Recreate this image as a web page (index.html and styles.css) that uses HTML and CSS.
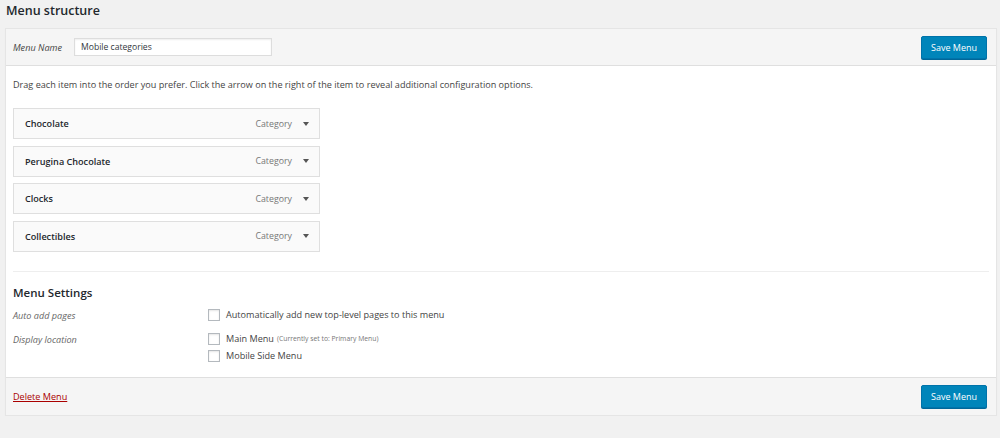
FILE: index.html
```html
<!DOCTYPE html>
<html lang="en">
<head>
    <meta charset="UTF-8">
    <title>Menus</title>
    <link rel="stylesheet" href="styles.css">
</head>
<body>
    <h2 class="page-title">Menu structure</h2>

    <div class="menu-edit">
        <!-- header with the menu name -->
        <div class="menu-header">
            <label class="name-field">
                <span class="name-label">Menu Name</span>
                <input type="text" class="name-input" value="Mobile categories">
            </label>
            <button class="save-btn">Save Menu</button>
        </div>

        <div class="menu-body">
            <p class="drag-help">Drag each item into the order you prefer. Click the arrow on the right of the item to reveal additional configuration options.</p>

            <ul class="menu-items">
                <li class="menu-item">
                    <span class="item-title">Chocolate</span>
                    <span class="item-type">Category</span>
                    <span class="item-arrow"></span>
                </li>
                <li class="menu-item">
                    <span class="item-title">Perugina Chocolate</span>
                    <span class="item-type">Category</span>
                    <span class="item-arrow"></span>
                </li>
                <li class="menu-item">
                    <span class="item-title">Clocks</span>
                    <span class="item-type">Category</span>
                    <span class="item-arrow"></span>
                </li>
                <li class="menu-item">
                    <span class="item-title">Collectibles</span>
                    <span class="item-type">Category</span>
                    <span class="item-arrow"></span>
                </li>
            </ul>

            <div class="menu-settings">
                <h3>Menu Settings</h3>
                <div class="setting-row">
                    <div class="setting-name">Auto add pages</div>
                    <div class="setting-input">
                        <label class="check"><span class="box"></span>Automatically add new top-level pages to this menu</label>
                    </div>
                </div>
                <div class="setting-row">
                    <div class="setting-name">Display location</div>
                    <div class="setting-input">
                        <label class="check"><span class="box"></span>Main Menu <span class="note">(Currently set to: Primary Menu)</span></label>
                        <label class="check"><span class="box"></span>Mobile Side Menu</label>
                    </div>
                </div>
            </div>
        </div>

        <div class="menu-footer">
            <a href="#" class="delete-link">Delete Menu</a>
            <button class="save-btn">Save Menu</button>
        </div>
    </div>
</body>
</html>
```

FILE: styles.css
```css
* {
    margin: 0;
    padding: 0;
    box-sizing: border-box;
}

body {
    font-family: "Open Sans", "Noto Sans", sans-serif;
    font-size: 9.1px;
    color: #23282d;
    background-color: #f1f1f1;
    padding: 0 3px 0 5px;
}

.page-title {
    font-size: 12.5px;
    font-weight: 600;
    color: #23282d;
    padding: 2px 0 0 1px;
    height: 28px;
}

.menu-edit {
    border: 1px solid #e5e5e5;
    box-shadow: 0 1px 1px rgba(0, 0, 0, 0.04);
    background: #fff;
}

.menu-header {
    display: flex;
    justify-content: space-between;
    align-items: center;
    height: 37px;
    padding: 0 9px 0 7px;
    background-color: #f5f5f5;
    border-bottom: 1px solid #dfdfdf;
}

.name-field {
    display: flex;
    align-items: center;
    gap: 12px;
}

.name-label {
    font-style: italic;
    color: #444;
}

.name-input {
    width: 198px;
    height: 18px;
    padding: 0 6px;
    font-family: inherit;
    font-size: 8.6px;
    color: #32373c;
    border: 1px solid #ddd;
    box-shadow: inset 0 1px 2px rgba(0, 0, 0, 0.07);
    background: #fff;
}

.save-btn {
    height: 23px;
    padding: 0 9px;
    font-family: inherit;
    font-size: 9px;
    color: #fff;
    background-color: #0085ba;
    border: 1px solid #0073aa;
    border-radius: 2px;
    box-shadow: 0 1px 0 #006799;
    cursor: pointer;
}

.menu-body {
    padding: 0 7px;
    background: #fff;
}

.drag-help {
    padding: 12px 0 0;
    height: 42px;
    color: #444;
}

.menu-items {
    list-style: none;
    width: 307px;
    display: flex;
    flex-direction: column;
    gap: 6.5px;
}

.menu-item {
    display: flex;
    align-items: center;
    height: 31px;
    padding: 0 10px 0 11px;
    background-color: #fafafa;
    border: 1px solid #dfdfdf;
}

.item-title {
    flex: 1;
    font-weight: 600;
    color: #23282d;
}

.item-type {
    color: #777;
    font-size: 8.8px;
    margin-right: 11px;
}

.item-arrow {
    width: 0;
    height: 0;
    border-left: 3px solid transparent;
    border-right: 3px solid transparent;
    border-top: 4px solid #555;
}

.menu-settings {
    margin-top: 19px;
    border-top: 1px solid #eee;
    padding: 13px 0 15px;
}

.menu-settings h3 {
    font-size: 11.5px;
    font-weight: 600;
    color: #23282d;
    margin-bottom: 9px;
}

.setting-row {
    display: flex;
    margin-bottom: 11px;
}

.setting-row:last-child {
    margin-bottom: 0;
}

.setting-name {
    width: 195px;
    font-style: italic;
    color: #666;
}

.setting-input {
    display: flex;
    flex-direction: column;
    gap: 5px;
}

.check {
    display: flex;
    align-items: center;
    gap: 6px;
    height: 12px;
    color: #444;
}

.box {
    width: 12px;
    height: 12px;
    border: 1px solid #b4b9be;
    background: #fff;
    box-shadow: inset 0 1px 2px rgba(0, 0, 0, 0.1);
}

.note {
    font-size: 6.8px;
    color: #777;
    margin-left: -3px;
}

.menu-footer {
    display: flex;
    justify-content: space-between;
    align-items: center;
    height: 38px;
    padding: 0 9px 0 7px;
    background-color: #f5f5f5;
    border-top: 1px solid #dfdfdf;
}

.delete-link {
    color: #a00;
    text-decoration: underline;
}
```
